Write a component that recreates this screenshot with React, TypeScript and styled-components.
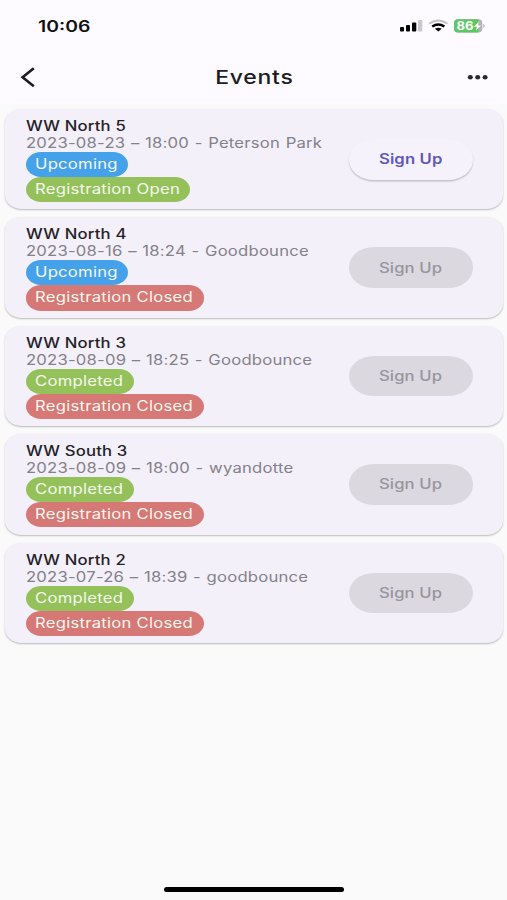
import React from 'react';
import styled, { createGlobalStyle } from 'styled-components';

const GlobalStyle = createGlobalStyle`
  * { box-sizing: border-box; }
  body { margin: 0; background: #fafafa; font-family: Inter, "Liberation Sans", sans-serif; }
`;

const Screen = styled.main`
  width: 507px;
  height: 900px;
  display: flex;
  flex-direction: column;
  background: #fafafa;
  overflow: hidden;
`;

const Top = styled.header`
  height: 104px;
  flex: none;
  background: #fdfbff;
`;

const StatusBar = styled.div`
  height: 52px;
  padding: 0 21px 0 38px;
  display: flex;
  align-items: center;
  justify-content: space-between;
`;

const Wide = styled.span<{ $scale?: number; $center?: boolean }>`
  display: inline-block;
  white-space: nowrap;
  transform: scaleX(${(p) => p.$scale ?? 1.19});
  transform-origin: ${(p) => (p.$center ? 'center' : 'left')};
`;

const Clock = styled.div`
  padding-top: 2px;
  font-size: 15.5px;
  line-height: 20px;
  font-weight: 600;
  color: #111;
`;

const StatusIcons = styled.svg`
  display: block;
  width: 88px;
  height: 20px;
`;

const BatteryText = styled.text`
  font: 700 11.5px Inter, sans-serif;
  fill: #fff;
`;

const NavBar = styled.nav`
  height: 50px;
  padding: 0 18px 0 20px;
  display: grid;
  grid-template-columns: 24px 1fr 24px;
  align-items: center;
`;

const IconButton = styled.button`
  border: 0;
  padding: 0;
  background: none;
  width: 24px;
  height: 24px;
`;

const Icon = styled.svg`
  display: block;
  width: 24px;
  height: 24px;
`;

const Title = styled.h1`
  margin: 0;
  padding: 2px 1px 0 0;
  text-align: center;
  font-size: 19px;
  line-height: 24px;
  font-weight: 500;
  letter-spacing: 0.6px;
  color: #1c1b1f;
`;

const List = styled.section`
  padding: 5px 4px 0 5px;
  display: flex;
  flex-direction: column;
  gap: 8px;
`;

const Card = styled.article`
  height: 100.4px;
  padding: 8px 30.5px 0 20.5px;
  display: flex;
  justify-content: space-between;
  background: #f3f0fa;
  border-radius: 17px / 14px;
  box-shadow: 0 1px 1.5px rgba(0, 0, 0, 0.2), 0 1px 3px rgba(0, 0, 0, 0.07);
`;

const Details = styled.div`
  display: flex;
  flex-direction: column;
  align-items: flex-start;
`;

const Name = styled.h2`
  margin: 0;
  height: 17px;
  font-size: 14px;
  line-height: 17px;
  font-weight: 500;
  letter-spacing: 0.15px;
  color: #242227;
`;

const When = styled.p`
  margin: 0;
  height: 18px;
  font-size: 14px;
  line-height: 17px;
  letter-spacing: 0.18px;
  word-spacing: 0.6px;
  color: #838189;
`;

type Tone = 'blue' | 'green' | 'red';
const tones: Record<Tone, string> = { blue: '#45a2ea', green: '#94c15a', red: '#d67875' };

const Pill = styled.span<{ $tone: Tone; $width: number }>`
  width: ${(p) => p.$width}px;
  height: 25.1px;
  padding-left: 9.6px;
  border-radius: 15px / 12.5px;
  background: ${(p) => tones[p.$tone]};
  color: #f5f8ef;
  font-size: 14px;
  line-height: 24px;
  letter-spacing: 0.21px;
`;

const SignUp = styled.button`
  margin-top: 22px;
  width: 124px;
  height: 40.5px;
  border: 0;
  padding: 0;
  border-radius: 25px / 20px;
  font: 600 14px/20px Inter, sans-serif;
  letter-spacing: 0.1px;
  color: #6256bd;
  background: #f6f2fc;
  box-shadow: 0 1.5px 1.5px rgba(0, 0, 0, 0.2);
  &:disabled {
    font-weight: 500;
    color: #98959e;
    background: #dbd8df;
    box-shadow: none;
  }
`;

const HomeBar = styled.div`
  width: 180.5px;
  height: 5px;
  margin: auto auto 8px 163.5px;
  flex: none;
  border-radius: 3px;
  background: #000;
`;

interface EventItem {
  name: string;
  when: string;
  status: 'Upcoming' | 'Completed';
  open: boolean;
}

const events: EventItem[] = [
  { name: 'WW North 5', when: '2023-08-23 – 18:00 - Peterson Park', status: 'Upcoming', open: true },
  { name: 'WW North 4', when: '2023-08-16 – 18:24 - Goodbounce', status: 'Upcoming', open: false },
  { name: 'WW North 3', when: '2023-08-09 – 18:25 - Goodbounce', status: 'Completed', open: false },
  { name: 'WW South 3', when: '2023-08-09 – 18:00 - wyandotte', status: 'Completed', open: false },
  { name: 'WW North 2', when: '2023-07-26 – 18:39 - goodbounce', status: 'Completed', open: false },
];

function EventCard({ event }: { event: EventItem }) {
  const upcoming = event.status === 'Upcoming';
  return (
    <Card>
      <Details>
        <Name><Wide>{event.name}</Wide></Name>
        <When><Wide>{event.when}</Wide></When>
        <Pill $tone={upcoming ? 'blue' : 'green'} $width={upcoming ? 102.5 : 108.5}>
          <Wide>{event.status}</Wide>
        </Pill>
        <Pill $tone={event.open ? 'green' : 'red'} $width={event.open ? 164.9 : 178.4}>
          <Wide>{event.open ? 'Registration Open' : 'Registration Closed'}</Wide>
        </Pill>
      </Details>
      <SignUp disabled={!event.open}><Wide $center>Sign Up</Wide></SignUp>
    </Card>
  );
}

export default function App() {
  return (
    <Screen>
      <GlobalStyle />
      <Top>
        <StatusBar>
          <Clock><Wide $scale={1.25}>10:06</Wide></Clock>
          <StatusIcons viewBox="0 0 88 20">
            <rect x="2" y="11" width="4" height="4.5" rx="1" />
            <rect x="8" y="9" width="4" height="6.5" rx="1" />
            <rect x="14" y="6.5" width="4.3" height="9" rx="1" />
            <rect x="20" y="4" width="4.3" height="11.5" rx="1" fill="#c9c8ca" />
            <g fill="none" strokeWidth="2">
              <path d="M31.2 7.6Q40.3 1.6 49.4 7.6" stroke="#c2c1c3" />
              <path d="M34.2 10.5Q40.3 6.4 46.4 10.5" stroke="#000" strokeWidth="2.4" />
            </g>
            <path d="M36.9 12.8Q40.3 10.6 43.7 12.8L40.3 15.6Z" />
            <rect x="56" y="3.2" width="28.3" height="13.4" rx="4" fill="#b5b4b6" />
            <path d="M60 3.2H80.5V16.6H60Q56 16.6 56 12.6V7.2Q56 3.2 60 3.2Z" fill="#60c565" />
            <path d="M85.5 8.2Q87.4 10 85.5 11.8Z" fill="#b5b4b6" stroke="#b5b4b6" strokeWidth="0.5" />
            <BatteryText x="58.5" y="14.2" textLength="17" lengthAdjust="spacingAndGlyphs">86</BatteryText>
            <path d="M80.8 5.8L75.8 10.7H79L77.8 14.4L83 9.4H80Z" fill="#fff" />
          </StatusIcons>
        </StatusBar>
        <NavBar>
          <IconButton aria-label="Back">
            <Icon viewBox="0 0 24 24">
              <path d="M13.8 3.2L2.6 12.2L13.8 21.2" fill="none" stroke="#1c1b1f" strokeWidth="2.6" />
            </Icon>
          </IconButton>
          <Title><Wide $center $scale={1.21}>Events</Wide></Title>
          <IconButton aria-label="More">
            <Icon viewBox="0 0 24 24" fill="#29282c">
              <ellipse cx="5.3" cy="12.2" rx="2.5" ry="2.2" />
              <ellipse cx="12.7" cy="12.2" rx="2.5" ry="2.2" />
              <ellipse cx="20.1" cy="12.2" rx="2.5" ry="2.2" />
            </Icon>
          </IconButton>
        </NavBar>
      </Top>
      <List>
        {events.map((event) => <EventCard key={event.name} event={event} />)}
      </List>
      <HomeBar />
    </Screen>
  );
}
